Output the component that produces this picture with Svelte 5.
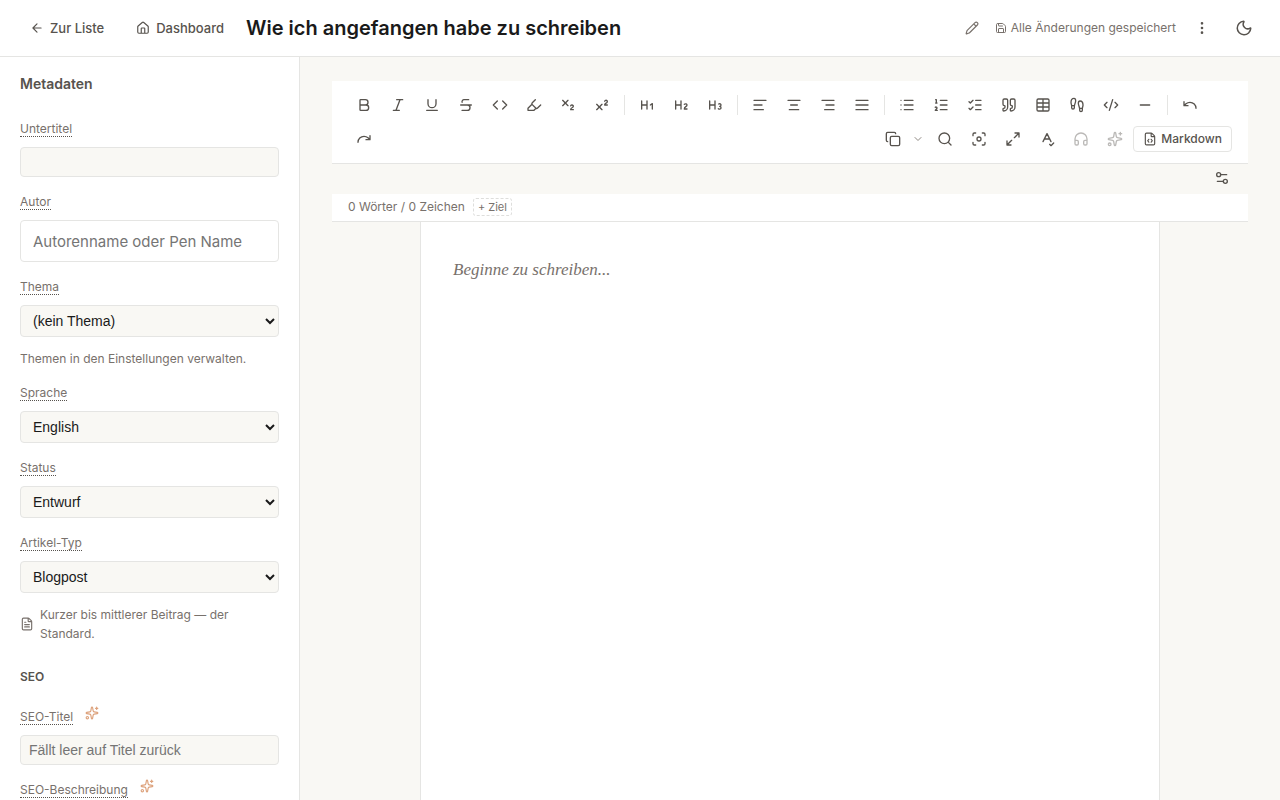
<script lang="ts">
  type Tool = { icon: string; label: string }

  const FILE = 'M6 22a2 2 0 0 1-2-2V4a2 2 0 0 1 2-2h8a2.4 2.4 0 0 1 1.704.706l3.588 3.588A2.4 2.4 0 0 1 20 8v12a2 2 0 0 1-2 2z M14 2v5a1 1 0 0 0 1 1h5'

  const ICONS: Record<string, string> = {
    back: 'M12 19l-7-7 7-7 M19 12H5',
    home: 'M15 21v-8a1 1 0 0 0-1-1h-4a1 1 0 0 0-1 1v8 M3 10a2 2 0 0 1 .709-1.528l7-6a2 2 0 0 1 2.582 0l7 6A2 2 0 0 1 21 10v9a2 2 0 0 1-2 2H5a2 2 0 0 1-2-2z',
    pencil: 'M21.174 6.812a1 1 0 0 0-3.986-3.987L3.842 16.174a2 2 0 0 0-.5.83l-1.321 4.352a.5.5 0 0 0 .623.622l4.353-1.32a2 2 0 0 0 .83-.497z M15 5l4 4',
    save: 'M15.2 3a2 2 0 0 1 1.4.6l3.8 3.8a2 2 0 0 1 .6 1.4V19a2 2 0 0 1-2 2H5a2 2 0 0 1-2-2V5a2 2 0 0 1 2-2z M17 21v-7a1 1 0 0 0-1-1H8a1 1 0 0 0-1 1v7 M7 3v4a1 1 0 0 0 1 1h7',
    more: 'M11 12a1 1 0 1 0 2 0a1 1 0 1 0-2 0 M11 5a1 1 0 1 0 2 0a1 1 0 1 0-2 0 M11 19a1 1 0 1 0 2 0a1 1 0 1 0-2 0',
    moon: 'M20.985 12.486a9 9 0 1 1-9.473-9.472c.405-.022.617.46.402.803a6 6 0 0 0 8.268 8.268c.344-.215.825-.004.803.401',
    bold: 'M6 12h9a4 4 0 0 1 0 8H7a1 1 0 0 1-1-1V5a1 1 0 0 1 1-1h7a4 4 0 0 1 0 8',
    italic: 'M19 4h-9 M14 20H5 M15 4L9 20',
    underline: 'M6 4v6a6 6 0 0 0 12 0V4 M4 20h16',
    strike: 'M16 4H9a3 3 0 0 0-2.83 4 M14 12a4 4 0 0 1 0 8H6 M4 12h16',
    code: 'M16 18l6-6-6-6 M8 6l-6 6 6 6',
    marker: 'M9 11l-6 6v3h9l3-3 M22 12l-4.6 4.6a2 2 0 0 1-2.8 0l-5.2-5.2a2 2 0 0 1 0-2.8L14 4',
    sub: 'M4 5l8 8 M12 5l-8 8 M20 19h-4c0-1.5.44-2 1.5-2.5S20 15.33 20 14c0-.47-.17-.93-.48-1.29a2.11 2.11 0 0 0-2.62-.44c-.42.24-.74.62-.9 1.07',
    sup: 'M4 19l8-8 M12 19l-8-8 M20 12h-4c0-1.5.442-2 1.5-2.5S20 8.334 20 7.002c0-.472-.17-.93-.484-1.29a2.105 2.105 0 0 0-2.617-.436c-.42.239-.738.614-.899 1.06',
    h1: 'M4 12h8 M4 18V6 M12 18V6 M17 12l3-2v8',
    h2: 'M4 12h8 M4 18V6 M12 18V6 M21 18h-4c0-4 4-3 4-6 0-1.5-2-2.5-4-1',
    h3: 'M4 12h8 M4 18V6 M12 18V6 M17.5 10.5c1.7-1 3.5 0 3.5 1.5a2 2 0 0 1-2 2 M17 17.5c2 1.5 4 .3 4-1.5a2 2 0 0 0-2-2',
    left: 'M21 5H3 M15 12H3 M17 19H3',
    center: 'M21 5H3 M17 12H7 M19 19H5',
    right: 'M21 5H3 M21 12H9 M21 19H7',
    justify: 'M3 5h18 M3 12h18 M3 19h18',
    list: 'M3 5h.01 M3 12h.01 M3 19h.01 M8 5h13 M8 12h13 M8 19h13',
    ordered: 'M11 5h10 M11 12h10 M11 19h10 M4 4h1v5 M4 9h2 M6.5 20H3.4c0-1 2.6-1.925 2.6-3.5a1.5 1.5 0 0 0-2.6-1.02',
    checks: 'M13 5h8 M13 12h8 M13 19h8 M3 17l2 2 4-4 M3 7l2 2 4-4',
    quote: 'M16 3a2 2 0 0 0-2 2v6a2 2 0 0 0 2 2 1 1 0 0 1 1 1v1a2 2 0 0 1-2 2 1 1 0 0 0-1 1v2a1 1 0 0 0 1 1 6 6 0 0 0 6-6V5a2 2 0 0 0-2-2z M5 3a2 2 0 0 0-2 2v6a2 2 0 0 0 2 2 1 1 0 0 1 1 1v1a2 2 0 0 1-2 2 1 1 0 0 0-1 1v2a1 1 0 0 0 1 1 6 6 0 0 0 6-6V5a2 2 0 0 0-2-2z',
    table: 'M12 3v18 M5 3h14a2 2 0 0 1 2 2v14a2 2 0 0 1-2 2H5a2 2 0 0 1-2-2V5a2 2 0 0 1 2-2z M3 9h18 M3 15h18',
    steps: 'M4 16v-2.38C4 11.5 2.97 10.5 3 8c.03-2.72 1.49-6 4.5-6C9.37 2 10 3.8 10 5.5c0 3.11-2 5.66-2 8.68V16a2 2 0 1 1-4 0Z M20 20v-2.38c0-2.12 1.03-3.12 1-5.62-.03-2.72-1.49-6-4.5-6C14.63 6 14 7.8 14 9.5c0 3.11 2 5.66 2 8.68V20a2 2 0 1 0 4 0Z M16 17h4 M4 13h4',
    block: 'M18 16l4-4-4-4 M6 8l-4 4 4 4 M14.5 4l-5 16',
    rule: 'M5 12h14',
    undo: 'M3 7v6h6 M21 17a9 9 0 0 0-9-9 9 9 0 0 0-6 2.3L3 13',
    redo: 'M21 7v6h-6 M3 17a9 9 0 0 1 9-9 9 9 0 0 1 6 2.3l3 2.7',
    copy: 'M10 8h10a2 2 0 0 1 2 2v10a2 2 0 0 1-2 2H10a2 2 0 0 1-2-2V10a2 2 0 0 1 2-2z M4 16c-1.1 0-2-.9-2-2V4c0-1.1.9-2 2-2h10c1.1 0 2 .9 2 2',
    chevron: 'M6 9l6 6 6-6',
    search: 'M21 21l-4.34-4.34 M3 11a8 8 0 1 0 16 0a8 8 0 1 0-16 0',
    focus: 'M9 12a3 3 0 1 0 6 0a3 3 0 1 0-6 0 M3 7V5a2 2 0 0 1 2-2h2 M17 3h2a2 2 0 0 1 2 2v2 M21 17v2a2 2 0 0 1-2 2h-2 M7 21H5a2 2 0 0 1-2-2v-2',
    expand: 'M15 3h6v6 M21 3l-7 7 M3 21l7-7 M9 21H3v-6',
    spell: 'M6 16l6-12 6 12 M8 12h8 M16 20l2 2 4-4',
    audio: 'M3 14h3a2 2 0 0 1 2 2v3a2 2 0 0 1-2 2H5a2 2 0 0 1-2-2v-7a9 9 0 0 1 18 0v7a2 2 0 0 1-2 2h-1a2 2 0 0 1-2-2v-3a2 2 0 0 1 2-2h3',
    sparkles: 'M11.017 2.814a1 1 0 0 1 1.966 0l1.051 5.558a2 2 0 0 0 1.594 1.594l5.558 1.051a1 1 0 0 1 0 1.966l-5.558 1.051a2 2 0 0 0-1.594 1.594l-1.051 5.558a1 1 0 0 1-1.966 0l-1.051-5.558a2 2 0 0 0-1.594-1.594l-5.558-1.051a1 1 0 0 1 0-1.966l5.558-1.051a2 2 0 0 0 1.594-1.594z M20 2v4 M22 4h-4 M2 20a2 2 0 1 0 4 0a2 2 0 1 0-4 0',
    markdown: `${FILE} M10 12.5L8 15l2 2.5 M14 12.5l2 2.5-2 2.5`,
    doc: `${FILE} M10 9H8 M16 13H8 M16 17H8`,
    sliders: 'M14 17H5 M19 7h-9 M14 17a3 3 0 1 0 6 0a3 3 0 1 0-6 0 M4 7a3 3 0 1 0 6 0a3 3 0 1 0-6 0',
  }

  const groups: Tool[][] = [
    [
      { icon: 'bold', label: 'Fett' },
      { icon: 'italic', label: 'Kursiv' },
      { icon: 'underline', label: 'Unterstrichen' },
      { icon: 'strike', label: 'Durchgestrichen' },
      { icon: 'code', label: 'Code' },
      { icon: 'marker', label: 'Hervorheben' },
      { icon: 'sub', label: 'Tiefgestellt' },
      { icon: 'sup', label: 'Hochgestellt' },
    ],
    [
      { icon: 'h1', label: 'Überschrift 1' },
      { icon: 'h2', label: 'Überschrift 2' },
      { icon: 'h3', label: 'Überschrift 3' },
    ],
    [
      { icon: 'left', label: 'Linksbündig' },
      { icon: 'center', label: 'Zentriert' },
      { icon: 'right', label: 'Rechtsbündig' },
      { icon: 'justify', label: 'Blocksatz' },
    ],
    [
      { icon: 'list', label: 'Liste' },
      { icon: 'ordered', label: 'Nummerierte Liste' },
      { icon: 'checks', label: 'Aufgabenliste' },
      { icon: 'quote', label: 'Zitat' },
      { icon: 'table', label: 'Tabelle' },
      { icon: 'steps', label: 'Fußnote' },
      { icon: 'block', label: 'Codeblock' },
      { icon: 'rule', label: 'Trennlinie' },
    ],
    [
      { icon: 'undo', label: 'Rückgängig' },
      { icon: 'redo', label: 'Wiederholen' },
    ],
  ]

  const viewTools: (Tool & { disabled?: boolean })[] = [
    { icon: 'search', label: 'Suchen' },
    { icon: 'focus', label: 'Fokusmodus' },
    { icon: 'expand', label: 'Vollbild' },
    { icon: 'spell', label: 'Rechtschreibung' },
    { icon: 'audio', label: 'Vorlesen', disabled: true },
    { icon: 'sparkles', label: 'KI-Assistent', disabled: true },
  ]

  let subtitle = $state('')
  let author = $state('')
  let seoTitle = $state('')
  let seoDescription = $state('')
  let topic = $state('(kein Thema)')
  let language = $state('English')
  let status = $state('Entwurf')
  let kind = $state('Blogpost')
</script>

{#snippet icon(name: string, size = 16)}
  <svg width={size} height={size} viewBox="0 0 24 24" aria-hidden="true"><path d={ICONS[name]} /></svg>
{/snippet}

<div class="app">
  <header class="topbar">
    <a class="nav" href="#liste">{@render icon('back', 14)}Zur Liste</a>
    <a class="nav" href="#dashboard">{@render icon('home', 14)}Dashboard</a>
    <h1>Wie ich angefangen habe zu schreiben</h1>
    <button class="edit" aria-label="Titel bearbeiten">{@render icon('pencil', 14)}</button>
    <span class="saved">{@render icon('save', 12)}Alle Änderungen gespeichert</span>
    <button class="menu" aria-label="Weitere Aktionen">{@render icon('more')}</button>
    <button class="theme" aria-label="Dunkles Design">{@render icon('moon', 18)}</button>
  </header>

  <div class="body">
    <aside>
      <h2>Metadaten</h2>
      <div class="field">
        <label for="subtitle"><span>Untertitel</span></label>
        <input id="subtitle" type="text" bind:value={subtitle} />
      </div>
      <div class="field">
        <label for="author"><span>Autor</span></label>
        <input id="author" class="large" type="text" placeholder="Autorenname oder Pen Name" bind:value={author} />
      </div>
      <div class="field">
        <label for="topic"><span>Thema</span></label>
        <select id="topic" bind:value={topic}><option>(kein Thema)</option></select>
        <p class="hint">Themen in den Einstellungen verwalten.</p>
      </div>
      <div class="field">
        <label for="language"><span>Sprache</span></label>
        <select id="language" bind:value={language}><option>English</option><option>Deutsch</option></select>
      </div>
      <div class="field">
        <label for="status"><span>Status</span></label>
        <select id="status" bind:value={status}><option>Entwurf</option></select>
      </div>
      <div class="field">
        <label for="kind"><span>Artikel-Typ</span></label>
        <select id="kind" bind:value={kind}><option>Blogpost</option></select>
        <p class="hint">{@render icon('doc', 14)}<span>Kurzer bis mittlerer Beitrag — der Standard.</span></p>
      </div>

      <h3>SEO</h3>
      <div class="field">
        <div class="label-row">
          <label for="seo-title"><span>SEO-Titel</span></label>
          <button class="suggest" aria-label="SEO-Titel vorschlagen">{@render icon('sparkles', 14)}</button>
        </div>
        <input id="seo-title" type="text" placeholder="Fällt leer auf Titel zurück" bind:value={seoTitle} />
      </div>
      <div class="field">
        <div class="label-row">
          <label for="seo-description"><span>SEO-Beschreibung</span></label>
          <button class="suggest" aria-label="SEO-Beschreibung vorschlagen">{@render icon('sparkles', 14)}</button>
        </div>
        <textarea id="seo-description" rows="3" bind:value={seoDescription}></textarea>
      </div>
    </aside>

    <main>
      <div class="toolbar" role="toolbar" aria-label="Formatierung">
        {#each groups as group, i}
          {#if i > 0}<span class="sep"></span>{/if}
          {#each group as tool}
            <button class="tool" aria-label={tool.label}>{@render icon(tool.icon)}</button>
          {/each}
        {/each}
        <div class="view-tools">
          <div class="split">
            <button class="tool" aria-label="Kopieren">{@render icon('copy')}</button>
            <button class="tool caret" aria-label="Kopieroptionen">{@render icon('chevron', 12)}</button>
          </div>
          {#each viewTools as tool}
            <button class="tool" aria-label={tool.label} disabled={tool.disabled}>{@render icon(tool.icon)}</button>
          {/each}
          <button class="markdown">{@render icon('markdown', 14)}Markdown</button>
        </div>
      </div>

      <div class="options">
        <button aria-label="Editor-Einstellungen">{@render icon('sliders')}</button>
      </div>

      <div class="count">
        <span>0 Wörter / 0 Zeichen</span>
        <button>+ Ziel</button>
      </div>

      <div class="paper">
        <div class="prose" contenteditable="true" role="textbox" tabindex="0" aria-label="Text" data-placeholder="Beginne zu schreiben..."></div>
      </div>
    </main>
  </div>
</div>

<style>
  :global(body) { margin: 0; }
  .app {
    --bg: #f9f8f4;
    --line: #e5e5e3;
    --ink: #1a1a1a;
    --mid: #57534e;
    --muted: #78716c;
    display: flex; flex-direction: column; height: 100vh;
    background: var(--bg); color: var(--ink);
    font: 13px/20px Inter, "Open Sans", sans-serif;
  }
  .app *, .app *::before { box-sizing: border-box; }
  svg {
    display: block; flex-shrink: 0; fill: none; stroke: currentColor;
    stroke-width: 2; stroke-linecap: round; stroke-linejoin: round;
  }
  button {
    display: flex; align-items: center; justify-content: center;
    padding: 0; border: 0; border-radius: 4px; background: none;
    color: var(--mid); font: inherit; cursor: pointer;
  }
  h1, h2, h3, p { margin: 0; }

  .topbar {
    display: flex; align-items: center; gap: 12px; flex-shrink: 0;
    height: 57px; padding: 0 20px; background: #fff; border-bottom: 1px solid var(--line);
  }
  .nav {
    display: flex; align-items: center; gap: 6px; padding: 6px 10px;
    color: var(--mid); font-weight: 500; text-decoration: none; white-space: nowrap;
  }
  h1 { flex: 1; font-size: 20px; line-height: 28px; font-weight: 600; white-space: nowrap; }
  .edit { width: 22px; height: 22px; color: var(--muted); }
  .saved { display: flex; align-items: center; gap: 4px; color: var(--muted); font-size: 12px; white-space: nowrap; }
  .menu { width: 28px; height: 28px; }
  .theme { width: 32px; height: 32px; }

  .body { display: flex; flex: 1; min-height: 0; }
  aside {
    flex: 0 0 300px; padding: 16px 20px; overflow-y: auto; scrollbar-width: none;
    background: #fff; border-right: 1px solid var(--line);
  }
  h2 { margin-bottom: 24px; color: var(--mid); font-size: 14px; line-height: 22px; font-weight: 600; }
  h3 { margin: 24px 0 20px; color: var(--mid); font-size: 12px; line-height: 20px; font-weight: 600; }
  .field { display: flex; flex-direction: column; gap: 9px; margin-bottom: 15px; }
  label { color: var(--muted); font-size: 12px; line-height: 19px; }
  label span { border-bottom: 1px dotted var(--mid); }
  .label-row { display: flex; gap: 12px; }
  .suggest { height: 12px; color: #dda27c; }
  input, select, textarea {
    width: 100%; margin: 0; border: 1px solid var(--line); border-radius: 4px;
    background-color: var(--bg); color: var(--ink); font: 14px "Liberation Sans", Arial, sans-serif;
  }
  input { height: 30px; padding: 0 8px; }
  select { height: 32px; padding: 0 8px; }
  input::placeholder { color: #757575; }
  .large { height: 42px; padding: 0 12px; background-color: #fff; font: 15px Inter, "Open Sans", sans-serif; }
  .hint {
    display: flex; align-items: center; gap: 6px; margin-top: 3px;
    color: var(--muted); font-size: 12px; line-height: 19px;
  }

  main { display: flex; flex-direction: column; flex: 1; min-width: 0; padding: 24px 32px 0; }
  .toolbar {
    display: flex; flex-wrap: wrap; align-items: center; gap: 2px;
    padding: 8px 16px; background: #fff; border-bottom: 1px solid var(--line);
  }
  .tool { width: 32px; height: 32px; }
  .tool:disabled { opacity: .4; cursor: default; }
  .sep { width: 1px; height: 20px; margin: 0 4px; background: var(--line); }
  .view-tools { display: flex; align-items: center; gap: 2px; margin-left: auto; }
  .split { display: flex; }
  .caret { width: 18px; color: #8f8983; }
  .markdown {
    gap: 4px; height: 26px; padding: 0 9px;
    border: 1px solid var(--line); font-size: 12px; font-weight: 500;
  }
  .options { display: flex; justify-content: flex-end; padding: 4px 16px 6px; }
  .options button { width: 20px; height: 20px; }
  .count {
    display: flex; align-items: center; gap: 8px; padding: 4px 16px 5px;
    background: #fff; border-bottom: 1px solid var(--line);
    color: var(--muted); font-size: 12px; line-height: 18px;
  }
  .count button {
    height: 18px; padding: 0 4px; border: 1px dashed #dededc; border-radius: 3px;
    color: var(--muted); font-size: 11px; line-height: 16px;
  }
  .paper {
    flex: 1; width: 100%; max-width: 740px; margin: 0 auto; padding: 32px;
    background: #fff; border: 1px solid var(--line); border-width: 0 1px;
  }
  .prose { min-height: 100%; outline: none; font: 17px/32px "Liberation Serif", Georgia, serif; }
  .prose:empty::before { content: attr(data-placeholder); color: var(--muted); font-style: italic; }
</style>
